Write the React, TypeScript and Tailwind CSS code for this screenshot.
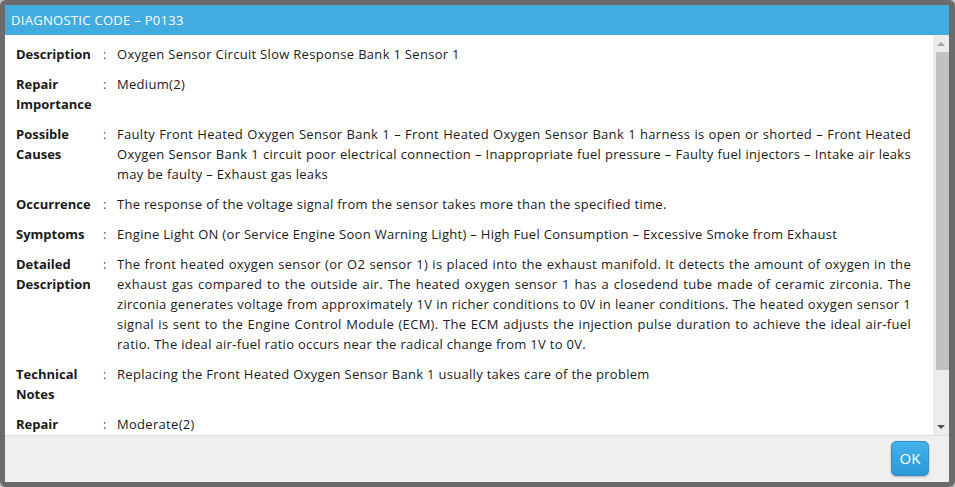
const rows: { label: string; value: string }[] = [
  { label: 'Description', value: 'Oxygen Sensor Circuit Slow Response Bank 1 Sensor 1' },
  { label: 'Repair Importance', value: 'Medium(2)' },
  {
    label: 'Possible Causes',
    value:
      'Faulty Front Heated Oxygen Sensor Bank 1 – Front Heated Oxygen Sensor Bank 1 harness is open or shorted – Front Heated Oxygen Sensor Bank 1 circuit poor electrical connection – Inappropriate fuel pressure – Faulty fuel injectors – Intake air leaks may be faulty – Exhaust gas leaks',
  },
  { label: 'Occurrence', value: 'The response of the voltage signal from the sensor takes more than the specified time.' },
  {
    label: 'Symptoms',
    value: 'Engine Light ON (or Service Engine Soon Warning Light) – High Fuel Consumption – Excessive Smoke from Exhaust',
  },
  {
    label: 'Detailed Description',
    value:
      'The front heated oxygen sensor (or O2 sensor 1) is placed into the exhaust manifold. It detects the amount of oxygen in the exhaust gas compared to the outside air. The heated oxygen sensor 1 has a closedend tube made of ceramic zirconia. The zirconia generates voltage from approximately 1V in richer conditions to 0V in leaner conditions. The heated oxygen sensor 1 signal is sent to the Engine Control Module (ECM). The ECM adjusts the injection pulse duration to achieve the ideal air‑fuel ratio. The ideal air‑fuel ratio occurs near the radical change from 1V to 0V.',
  },
  { label: 'Technical Notes', value: 'Replacing the Front Heated Oxygen Sensor Bank 1 usually takes care of the problem' },
  { label: 'Repair Difficulty', value: 'Moderate(2)' },
];

export default function App() {
  return (
    <div className="w-[955px] h-[487px] bg-[#bdbdbd] font-['Open_Sans',sans-serif]">
      <div className="w-full h-full flex flex-col border-[5px] border-r-[6px] border-[#6b6b6b] rounded-md overflow-hidden bg-white">
        <div className="h-[30px] shrink-0 bg-[#42abdf] text-white text-[13px] tracking-[0.3px] leading-[30px] pl-[6px]">
          DIAGNOSTIC CODE – P0133
        </div>

        <div className="h-[400px] shrink-0 flex">
          <div className="flex-1 overflow-hidden pl-[11px] pr-[22px] pt-[4px] text-[13px] leading-[20px] text-[#1a1a1a]">
            {rows.map(row => (
              <div key={row.label} className="flex py-[5px]">
                <div className="w-[87px] shrink-0 font-bold pr-2">{row.label}</div>
                <div className="w-[14px] shrink-0 text-[#555]">:</div>
                <div className="flex-1 text-justify tracking-[0.3px]">{row.value}</div>
              </div>
            ))}
          </div>

          <div className="w-[16px] shrink-0 bg-[#ececec] flex flex-col items-center">
            <div className="h-[17px] flex items-center justify-center">
              <div className="w-0 h-0 border-l-[4px] border-r-[4px] border-b-[4px] border-l-transparent border-r-transparent border-b-[#a3a3a3]" />
            </div>
            <div className="ml-[2px] w-[13px] h-[318px] bg-[#c1c1c1]" />
            <div className="flex-1" />
            <div className="h-[17px] flex items-center justify-center">
              <div className="w-0 h-0 border-l-[4px] border-r-[4px] border-t-[4px] border-l-transparent border-r-transparent border-t-[#505050]" />
            </div>
          </div>
        </div>

        <div className="flex-1 bg-[#efefef] border-t border-[#dcdcdc] flex justify-end items-start pt-[5px] pr-[20px]">
          <button className="w-[38px] h-[35px] rounded-[5px] border border-[#2b8fcb] bg-gradient-to-b from-[#45b3ea] to-[#2a98d8] text-white text-[15px] shadow-[0_1px_2px_rgba(0,0,0,0.25)]">
            OK
          </button>
        </div>
      </div>
    </div>
  );
}
